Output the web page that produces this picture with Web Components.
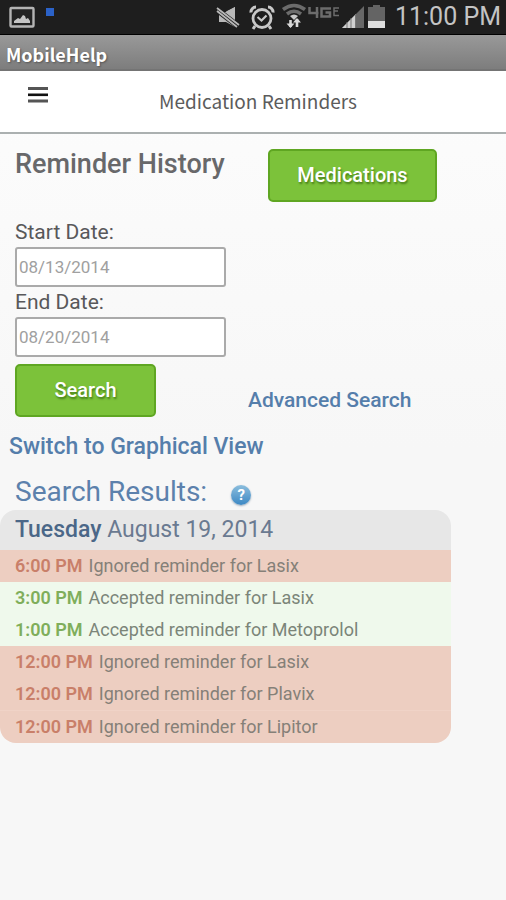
<!DOCTYPE html>
<html lang="en">
<head>
<meta charset="utf-8">
<meta name="viewport" content="width=device-width, initial-scale=1">
<title>Medication Reminders</title>
<style>
  html { min-height: 100%; background: linear-gradient(#fdfdfd, #f7f7f7 50%, #f7f7f7); }
  body { margin: 0; font-family: Roboto, "Liberation Sans", sans-serif; color: #5a5a5c; }
</style>
</head>
<body>
<reminder-app></reminder-app>
<script>
class Base extends HTMLElement {
  connectedCallback() {
    if (this.shadowRoot) return;
    this.attachShadow({ mode: "open" }).innerHTML = this.render();
  }
}

customElements.define("status-bar", class extends Base {
  render() {
    return `<style>
      :host { display: flex; align-items: center; height: 35px; padding: 0 5px 0 9px; background: #1e1e1e; color: #c4c4c4; border-bottom: 1px solid #000; box-sizing: border-box; }
      svg { display: block; flex: none; }
      .grow { flex: 1; }
      time { font-size: 25px; line-height: 34px; margin-left: 10px; }
    </style>
    <svg width="26" height="34" viewBox="0 0 26 34"><rect x="1.5" y="8" width="23" height="18.5" rx="1" fill="#222" stroke="#b4b4b4" stroke-width="2.4"/><path d="M5 23v-2l4-3 2 1 3-4 2 1 1 3 2-1 2 3v2z" fill="#c4c4c4"/></svg>
    <svg width="20" height="34" viewBox="0 0 20 34"><rect x="11" y="8" width="8" height="8" fill="#2b62c8"/></svg>
    <span class="grow"></span>
    <svg width="26" height="34" viewBox="0 0 26 34"><path d="M3 12h7l9-5v20l-9-5H3z" fill="#b8b8b8"/><path d="M0 9l22 17" stroke="#1e1e1e" stroke-width="6"/><path d="M1 8l22 17M1 11l20 16" stroke="#b8b8b8" stroke-width="1.800"/><path d="M10 11.500l9-4.500v11.500z" fill="#b8b8b8"/></svg>
    <svg width="36" height="34" viewBox="0 0 36 34"><g fill="none" stroke="#c8c8c8"><circle cx="20" cy="18.500" r="9" stroke-width="2.800"/><path d="M9 12.500A5 5 0 0 1 14 7M26 7a5 5 0 0 1 5 5.500" stroke-width="3"/><path d="M13 26l-2 3M27 26l2 3" stroke-width="3"/><path d="M15.500 17l4 3.500 5-5" stroke-width="2.200"/></g></svg>
    <svg width="30" height="34" viewBox="-4 0 30 34"><g fill="none" stroke="#6c6c6c" stroke-width="3.500"><path d="M1 9.500q11-8 22 0M5 14q7-5.500 14 0"/></g><path d="M8 16q4-3 8 0l-4 4z" fill="#c8c8c8"/><path d="M8.500 27v-7M15 19v8" stroke="#d8d8d8" stroke-width="2.600"/><path d="M4.500 23.500h8L8.500 28zM11 22.500h8L15 18z" fill="#d8d8d8"/></svg>
    <svg width="34" height="34" viewBox="0 0 34 34"><g fill="none" stroke="#6c6c6c" stroke-width="2.500"><path d="M1.500 7v6h9M9 7v11M23 8.500h-9.500v8h8.500v-4h-4.500"/><path d="M31 8h-5v3h4M26 8v7.500h5" stroke-width="1.500"/></g></svg>
    <svg width="26" height="34" viewBox="0 0 26 34"><path d="M0 28L22 6v22z" fill="#686868"/><path d="M0 28L14 14v14z" fill="#d0d0d0"/><path d="M5 22v6M9 18v10M13.500 14v14" stroke="#777"/></svg>
    <svg width="17" height="34" viewBox="0 0 17 34"><path d="M0 7h5V5h7v2h5v21H0z" fill="#646464"/><path d="M0 21h17v7H0z" fill="#dedede"/></svg>
    <time>11:00 PM</time>`;
  }
});

customElements.define("app-title", class extends Base {
  render() {
    return `<style>
      :host { display: block; box-sizing: border-box; height: 36px; padding: 3px 6px 0; background: linear-gradient(#999, #7d7d7d); border-bottom: 2px solid #747474;
        font: bold 18px/32px "Noto Sans CJK SC", "Open Sans", sans-serif; color: #fff; text-shadow: 1px 1px 2px #555; }
    </style><slot></slot>`;
  }
});

customElements.define("page-header", class extends Base {
  render() {
    return `<style>
      :host { display: grid; grid-template-columns: 76px 1fr 66px; height: 63px; box-sizing: border-box; border-bottom: 2px solid #abb0b0; background: #fff; }
      button { border: 0; background: none; padding: 0 0 14px 27px; display: flex; align-items: center; }
      h1 { margin: 0; font: 400 19px/60px "Noto Sans CJK SC", "Open Sans", sans-serif; color: #5c5c5c; text-align: center; }
    </style>
    <button type="button" aria-label="Menu"><svg width="22" height="18" viewBox="0 0 22 18"><path d="M1 2.500h20M1 15h20" stroke="#555" stroke-width="3"/><path d="M1 8.800h20" stroke="#111" stroke-width="2.600"/></svg></button>
    <h1><slot></slot></h1>`;
  }
});

customElements.define("action-button", class extends Base {
  render() {
    return `<style>
      :host { display: block; }
      button { width: 100%; height: 53px; padding: 0 0 2px; border: 2px solid #5fa622; border-radius: 5px; background: #7cc23a; color: #fff; font: 500 20px/26px Roboto, sans-serif; text-shadow: 1px 2px 2px #487f1a; }
    </style><button type="button"><slot></slot></button>`;
  }
});

customElements.define("date-field", class extends Base {
  render() {
    return `<style>
      :host { display: block; }
      label { display: block; font-size: 21px; line-height: 30px; color: #58585a; }
      input { display: block; width: 100%; height: 40px; box-sizing: border-box; padding: 0 2px; border: 2px solid #aaa; border-radius: 3px; background: #fff; color: #a0a0a0; font: 400 17px/24px Roboto, sans-serif; }
    </style>
    <label for="date">${this.getAttribute("label")}</label>
    <input id="date" type="text" value="${this.getAttribute("value")}">`;
  }
});

customElements.define("text-link", class extends Base {
  render() {
    return `<style>
      :host { display: block; font-size: 21px; }
      a { font-weight: 500; line-height: 26px; color: #557eab; text-decoration: none; white-space: nowrap; }
    </style><a href="#"><slot></slot></a>`;
  }
});

customElements.define("help-badge", class extends Base {
  render() {
    return `<style>
      :host { display: block; }
      button { display: grid; place-items: center; width: 20px; height: 20px; padding: 0; border: 0; border-radius: 50%; background: linear-gradient(#8cbedd, #3c88c4); box-shadow: 0 1px 2px #9ab; color: #fff; font: bold 15px/20px Roboto, sans-serif; }
    </style><button type="button" aria-label="Help">?</button>`;
  }
});

customElements.define("reminder-entry", class extends Base {
  render() {
    return `<style>
      :host { display: flex; align-items: center; gap: 6px; height: 32px; padding-left: 15px; background: #edcec1; color: #858078; font-size: 18px; line-height: 32px; white-space: nowrap; }
      :host([status="accepted"]) { background: #eff9ec; color: #7b8579; }
      time { font-weight: 600; font-size: 18px; color: #c97f69; }
      :host([status="accepted"]) time { color: #7fae5b; }
    </style><time>${this.getAttribute("time")}</time><span><slot></slot></span>`;
  }
});

customElements.define("reminder-log", class extends Base {
  render() {
    return `<style>
      :host { display: block; border-radius: 16px; overflow: hidden; margin-right: 55px; }
      h3 { margin: 0; padding-left: 15px; background: #e7e7e7; font-weight: 400; font-size: 23px; line-height: 40px; color: #6a7a91; }
      h3 ::slotted(b) { font-weight: 500; color: #4b6788; }
      ::slotted(reminder-entry:last-of-type) { border-top: 1px solid #f0d3c7; }
    </style><h3><slot name="date"></slot></h3><slot></slot>`;
  }
});

customElements.define("reminder-app", class extends Base {
  render() {
    return `<style>
      :host { display: block; }
      main { display: flex; flex-direction: column; }
      .top { display: grid; grid-template-columns: 210px 169px; column-gap: 43px; padding: 15px 15px 0; align-items: start; }
      h2 { margin: 0; font-weight: 500; font-size: 27px; line-height: 30px; color: #68686a; white-space: nowrap; }
      form { padding: 15px 15px 0; }
      date-field { width: 211px; }
      .actions { display: flex; align-items: end; gap: 92px; padding-top: 7px; }
      .actions action-button { width: 141px; }
      .actions text-link { padding-bottom: 4px; }
      .switch { padding: 16px 9px 0; font-size: 23px; }
      .results { display: flex; align-items: center; gap: 24px; padding: 14px 15px 0; }
      .results h2 { font-weight: 400; font-size: 28px; line-height: 36px; color: #5c81ac; }
      .results help-badge { padding-top: 5px; }
    </style>
    <status-bar></status-bar>
    <app-title>MobileHelp</app-title>
    <page-header>Medication Reminders</page-header>
    <main>
      <div class="top"><h2>Reminder History</h2><action-button>Medications</action-button></div>
      <form>
        <date-field label="Start Date:" value="08/13/2014"></date-field>
        <date-field label="End Date:" value="08/20/2014"></date-field>
        <div class="actions"><action-button>Search</action-button><text-link>Advanced Search</text-link></div>
      </form>
      <text-link class="switch">Switch to Graphical View</text-link>
      <div class="results"><h2>Search Results:</h2><help-badge></help-badge></div>
      <reminder-log>
        <b slot="date">Tuesday</b><span slot="date"> August 19, 2014</span>
        <reminder-entry time="6:00 PM">Ignored reminder for Lasix</reminder-entry>
        <reminder-entry time="3:00 PM" status="accepted">Accepted reminder for Lasix</reminder-entry>
        <reminder-entry time="1:00 PM" status="accepted">Accepted reminder for Metoprolol</reminder-entry>
        <reminder-entry time="12:00 PM">Ignored reminder for Lasix</reminder-entry>
        <reminder-entry time="12:00 PM">Ignored reminder for Plavix</reminder-entry>
        <reminder-entry time="12:00 PM">Ignored reminder for Lipitor</reminder-entry>
      </reminder-log>
    </main>`;
  }
});
</script>
</body>
</html>
